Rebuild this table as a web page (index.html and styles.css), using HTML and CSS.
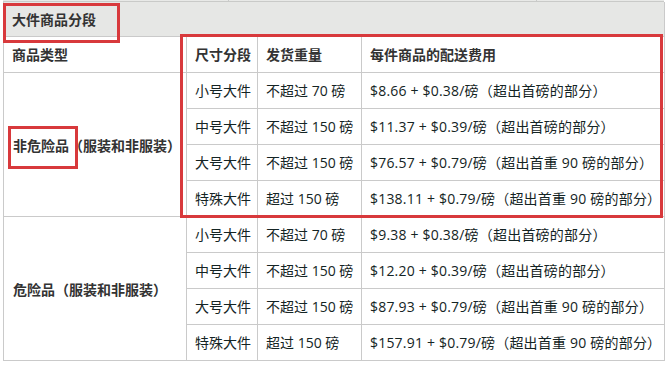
FILE: index.html
```html
<!DOCTYPE html>
<html lang="zh-CN">
<head>
<meta charset="utf-8">
<title>大件商品分段</title>
<link rel="stylesheet" href="styles.css">
</head>
<body>
<div class="page">
  <div class="prev-row"><span class="pc pc1"></span><span class="pc pc2"></span><span class="pc pc3"></span></div>
  <table class="fees">
    <colgroup>
      <col class="c1"><col class="c2"><col class="c3"><col class="c4">
    </colgroup>
    <tr class="cap-row"><td colspan="4" class="cap">大件商品分段</td></tr>
    <tr>
      <td class="th">商品类型</td>
      <td class="th">尺寸分段</td>
      <td class="th">发货重量</td>
      <td class="th">每件商品的配送费用</td>
    </tr>
    <tr>
      <td rowspan="4" class="th group">非危险品（服装和非服装）</td>
      <td>小号大件</td><td>不超过 70 磅</td><td class="fee">$8.66 + $0.38/磅（超出首磅的部分）</td>
    </tr>
    <tr><td>中号大件</td><td>不超过 150 磅</td><td class="fee">$11.37 + $0.39/磅（超出首磅的部分）</td></tr>
    <tr><td>大号大件</td><td>不超过 150 磅</td><td class="fee">$76.57 + $0.79/磅（超出首重 90 磅的部分）</td></tr>
    <tr><td>特殊大件</td><td>超过 150 磅</td><td class="fee">$138.11 + $0.79/磅（超出首重 90 磅的部分）</td></tr>
    <tr>
      <td rowspan="4" class="th group">危险品（服装和非服装）</td>
      <td>小号大件</td><td>不超过 70 磅</td><td class="fee">$9.38 + $0.38/磅（超出首磅的部分）</td>
    </tr>
    <tr><td>中号大件</td><td>不超过 150 磅</td><td class="fee">$12.20 + $0.39/磅（超出首磅的部分）</td></tr>
    <tr><td>大号大件</td><td>不超过 150 磅</td><td class="fee">$87.93 + $0.79/磅（超出首重 90 磅的部分）</td></tr>
    <tr><td>特殊大件</td><td>超过 150 磅</td><td class="fee">$157.91 + $0.79/磅（超出首重 90 磅的部分）</td></tr>
  </table>
  <div class="mark mark-title"></div>
  <div class="mark mark-block"></div>
  <div class="mark mark-label"></div>
</div>
</body>
</html>
```
FILE: styles.css
```css
html, body {
  margin: 0;
  padding: 0;
  background: #ffffff;
}
body {
  font-family: "Open Sans", "Noto Sans CJK SC", sans-serif;
  font-size: 14px;
  color: #142424;
}
.page {
  position: relative;
  width: 668px;
  height: 366px;
  padding-left: 3px;
  box-sizing: border-box;
  overflow: hidden;
}
.prev-row {
  display: flex;
  width: 661px;
  height: 1px;
  border-bottom: 1px solid #c9cac8;
  background: #e8e9e7;
}
.pc {
  display: block;
  height: 1px;
}
.pc1 { width: 225px; border-right: 1px solid #c9cac8; }
.pc2 { width: 307px; border-right: 1px solid #c9cac8; }
.pc3 { flex: 1; }
.fees {
  border-collapse: collapse;
  table-layout: fixed;
  width: 661px;
}
.c1 { width: 183px; }
.c2 { width: 71px; }
.c3 { width: 104px; }
.c4 { width: 303px; }
.fees tr {
  height: 36px;
}
.fees tr.cap-row {
  height: 34px;
}
.fees td {
  border: 1px solid #cacaca;
  border-top: none;
  padding: 2px 0 0 8px;
  line-height: 20px;
  white-space: nowrap;
  vertical-align: middle;
}
.fees .fee {
  letter-spacing: 0.2px;
}
.fees .cap {
  background: #e6e7e5;
  font-weight: bold;
  color: #333;
  padding-top: 3px;
}
.fees .th {
  font-weight: bold;
  color: #333;
}
.fees .group {
  padding-left: 9px;
  padding-top: 4px;
}
.mark {
  position: absolute;
  border: 3px solid #d8393c;
  box-sizing: border-box;
}
.mark-title {
  left: 3px;
  top: 3px;
  width: 117px;
  height: 40px;
}
.mark-block {
  left: 180px;
  top: 34px;
  width: 483px;
  height: 184px;
}
.mark-label {
  left: 8px;
  top: 126px;
  width: 70px;
  height: 43px;
}
```
